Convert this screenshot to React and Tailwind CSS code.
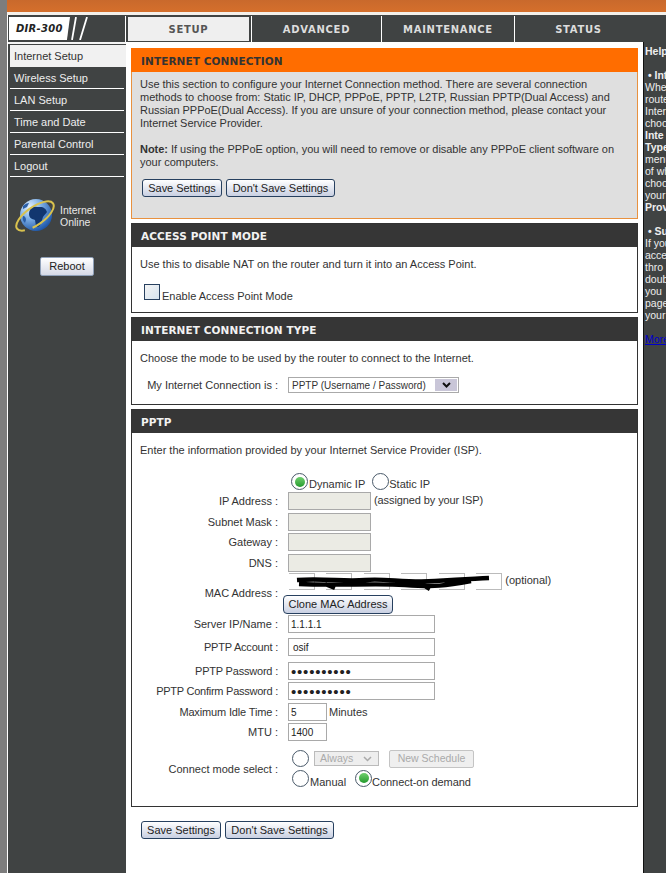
import React from 'react';

const bodyFont = "font-['Liberation_Sans',sans-serif]";
const headFont = "font-['DejaVu_Sans',sans-serif]";

const menu = ['Wireless Setup', 'LAN Setup', 'Time and Date', 'Parental Control', 'Logout'];

const helpLines = [
  ['Whe', false], ['route', false], ['Inter', false], ['choo', false], ['Inte', true], ['Type', true],
  ['menu', false], ['of wh', false], ['choo', false], ['your', false], ['Prov', true],
];
const helpLines2 = ['If you', 'acce', 'thro', 'doub', 'you', 'page', 'your'];

const Btn = ({ children, className = '' }) => (
  <button className={`h-[18px] rounded-[3px] border border-[#27405f] bg-gradient-to-b from-white to-[#c9d0e2] text-[11px] leading-none text-[#222] ${className}`}>
    {children}
  </button>
);

const Radio = ({ on, className = '' }) => (
  <span className={`flex h-[17px] w-[17px] shrink-0 items-center justify-center rounded-full border border-[#4a5a6a] bg-white ${className}`}>
    {on && <span className="h-[10px] w-[10px] rounded-full bg-gradient-to-b from-[#6fd06f] to-[#1f9a2c]" />}
  </span>
);

const Field = ({ className = '', children }) => (
  <div className={`flex h-[18px] items-center border border-[#a9a9a9] px-[2px] text-[10px] text-[#222] ${className}`}>
    {children}
  </div>
);

const Section = ({ title, children, className = '' }) => (
  <div className={`border border-[#333] bg-white ${className}`}>
    <div className={`flex h-[23px] items-center bg-[#363636] px-[9px] pt-[2px] text-[10.5px] font-bold tracking-[0.1px] text-[#f2f2f2] ${headFont}`}>
      {title}
    </div>
    {children}
  </div>
);

const Row = ({ label, className = '', labelClass = '', children }) => (
  <div className={`flex h-[18px] items-center ${className}`}>
    <div className={`w-[146px] shrink-0 text-right text-[11px] text-[#333] ${labelClass}`}>{label}</div>
    <div className="ml-[10px] flex items-center">{children}</div>
  </div>
);

const Globe = () => (
  <svg width="42" height="38" viewBox="0 0 42 38" className="shrink-0">
    <defs>
      <radialGradient id="gl" cx="30%" cy="25%" r="80%">
        <stop offset="0" stopColor="#e4f0fc" />
        <stop offset="0.45" stopColor="#7fb0e6" />
        <stop offset="1" stopColor="#1d56a8" />
      </radialGradient>
    </defs>
    <circle cx="22" cy="18" r="16" fill="url(#gl)" />
    <path d="M17 11c3-2 6-1 9-1 4 0 6 2 7 5-1 2-3 3-4 5l-2 6c-1 4-4 5-5 3l-1-6c-3-1-6-2-6-6 0-3 1-4 2-6z" fill="#12366f" />
    <path d="M9 9c2-2 4-3 6-3l-2 4-4 2zM9 19c2 0 3 2 3 4l-1 3c-2-2-3-4-2-7z" fill="#2a5ea8" />
    <ellipse cx="21" cy="19" rx="22" ry="9" transform="rotate(-35 21 19)" fill="none" stroke="#d9c24e" strokeWidth="2" strokeDasharray="34 8 60" />
  </svg>
);

export default function App() {
  return (
    <div className={`flex h-[873px] w-[666px] overflow-hidden bg-white text-[#333] ${bodyFont}`}>
      <div className="w-[7px] shrink-0 bg-[#7d7d7d]" />
      <div className="flex min-w-0 flex-1 flex-col">
        <div className="h-[12px] bg-gradient-to-b from-[#c9692c] to-[#d56f2c]" />
        <div className="h-[3px] bg-[#f4f0ea]" />

        <div className="ml-px flex h-[27px] bg-[#404343]">
          <div className="relative w-[117px] shrink-0 overflow-hidden">
            <div className={`ml-px mt-[2px] flex h-[23px] w-[61px] items-center bg-white pl-[7px] text-[10px] font-bold italic tracking-[0.3px] text-[#222] [clip-path:polygon(0_0,100%_0,95%_100%,0_100%)] ${headFont}`}>
              DIR-300
            </div>
            <svg className="absolute left-[62px] top-[2px]" width="26" height="23" viewBox="0 0 26 23">
              <path d="M6 0 L2 23 M17 0 L10 23" stroke="#fff" strokeWidth="1.8" fill="none" />
            </svg>
          </div>
          <div className={`flex flex-1 pt-px text-[10px] font-bold tracking-[0.7px] ${headFont}`}>
            <div className="flex w-[127px] items-center justify-center border-x border-white px-[2px] py-px">
              <div className="flex h-full w-full items-center justify-center bg-[#efefef] text-[#555]">SETUP</div>
            </div>
            <div className="flex w-[130px] items-center justify-center border-r border-white text-[#ddd]">ADVANCED</div>
            <div className="flex w-[133px] items-center justify-center border-r border-white text-[#ddd]">MAINTENANCE</div>
            <div className="flex w-[127px] items-center justify-center text-[#ddd]">STATUS</div>
          </div>
        </div>

        <div className="flex min-h-0 flex-1">
          <div className="ml-px w-[118px] shrink-0 border-t-2 border-[#f4f4f4] bg-[#404343] pt-px">
            <div className="ml-[2px] flex h-[22px] items-center bg-[#f1f1f1] pl-[4px] pt-px text-[11px] text-[#333]">Internet Setup</div>
            {menu.map((m) => (
              <div key={m} className="mx-[2px] flex h-[22px] items-center border-b border-white pl-[4px] pt-px text-[11px] text-[#eee]">
                {m}
              </div>
            ))}
            <div className="ml-[6px] mt-[20px] flex items-center gap-[4px]">
              <Globe />
              <div className="text-[10.5px] leading-[12px] text-[#e8e8e8]">
                Internet
                <br />
                Online
              </div>
            </div>
            <div className="mt-[22px] flex justify-center">
              <button className="h-[19px] w-[54px] rounded-[2px] border border-[#8fa0b8] bg-gradient-to-b from-white to-[#d5d9e6] text-[11px] text-[#222]">
                Reboot
              </button>
            </div>
          </div>

          <div className="w-[517px] shrink-0 px-[5px] pt-[6px]">
            <div className="h-[171px] border border-[#e8913f] bg-[#dfdfdf]">
              <div className={`-mx-px -mt-px flex h-[24px] items-center bg-[#ff6d00] px-[10px] pt-[3px] text-[10.5px] font-bold tracking-[0.1px] text-[#333] ${headFont}`}>
                INTERNET CONNECTION
              </div>
              <div className="px-[8px] pt-[6px] text-[11px] leading-[13px] tracking-[-0.03px]">
                <p>
                  Use this section to configure your Internet Connection method. There are several connection
                  <br />
                  methods to choose from: Static IP, DHCP, PPPoE, PPTP, L2TP, Russian PPTP(Dual Access) and
                  <br />
                  Russian PPPoE(Dual Access). If you are unsure of your connection method, please contact your
                  <br />
                  Internet Service Provider.
                </p>
                <p className="mt-[13px]">
                  <b>Note:</b> If using the PPPoE option, you will need to remove or disable any PPPoE client software on
                  <br />
                  your computers.
                </p>
                <div className="mt-[10px] flex gap-[4px] pl-[2px]">
                  <Btn className="w-[80px]">Save Settings</Btn>
                  <Btn className="w-[109px]">Don't Save Settings</Btn>
                </div>
              </div>
            </div>

            <Section title="ACCESS POINT MODE" className="mt-[4px] h-[90px]">
              <p className="px-[8px] pt-[11px] text-[11px] leading-[13px]">
                Use this to disable NAT on the router and turn it into an Access Point.
              </p>
              <div className="ml-[12px] mt-[13px] flex items-end gap-[2px] text-[11px] leading-[13px]">
                <span className="h-[16px] w-[16px] border border-[#27405f] bg-gradient-to-br from-[#f4f4f4] to-[#d5e3ef]" />
                <span className="translate-y-[3px]">Enable Access Point Mode</span>
              </div>
            </Section>

            <Section title="INTERNET CONNECTION TYPE" className="mt-[4px] h-[88px]">
              <p className="px-[8px] pt-[11px] text-[11px] leading-[13px]">
                Choose the mode to be used by the router to connect to the Internet.
              </p>
              <div className="mt-[11px] flex h-[18px] items-center">
                <div className="w-[146px] shrink-0 text-right text-[11px]">My Internet Connection is :</div>
                <div className="ml-[10px] flex h-[16px] w-[171px] items-center justify-between border border-[#aaa] pl-[3px] text-[10px]">
                  PPTP (Username / Password)
                  <span className="mr-px flex h-[12px] w-[22px] items-center justify-center bg-[#c9c6d8] text-[#111]">
                    <svg width="9" height="6" viewBox="0 0 9 6"><path d="M1 1l3.5 3.5L8 1" fill="none" stroke="#111" strokeWidth="2" /></svg>
                  </span>
                </div>
              </div>
            </Section>

            <Section title="PPTP" className="mt-[4px] h-[398px]">
              <p className="px-[8px] pt-[11px] text-[11px] leading-[13px]">
                Enter the information provided by your Internet Service Provider (ISP).
              </p>
              <div className="ml-[159px] mt-[16px] flex h-[18px] items-start text-[11px]">
                <Radio on />
                <span className="ml-px mt-[4px] leading-[15px]">Dynamic IP</span>
                <Radio className="ml-[7px]" />
                <span className="mt-[4px] leading-[15px]">Static IP</span>
              </div>
              <Row label="IP Address :" className="mt-px">
                <Field className="w-[83px] bg-[#ebebe4]" />
                <span className="ml-[3px] -mt-[2px] text-[11px] tracking-[-0.1px]">(assigned by your ISP)</span>
              </Row>
              <Row label="Subnet Mask :" className="mt-[3px]"><Field className="w-[83px] bg-[#ebebe4]" /></Row>
              <Row label="Gateway :" className="mt-[2px]"><Field className="w-[83px] bg-[#ebebe4]" /></Row>
              <Row label="DNS :" className="mt-[3px]"><Field className="w-[83px] bg-[#ebebe4]" /></Row>
              <div className="mt-[3px] flex h-[37px] items-center">
                <div className="w-[146px] shrink-0 text-right text-[11px]">MAC Address :</div>
                <div className="relative ml-[5px]">
                  <div className="ml-[6px] flex h-[18px] items-center gap-[11.4px]">
                    {[0, 1, 2, 3, 4, 5].map((i) => (
                      <span key={i} className="h-[17px] w-[26px] border-y border-r border-[#bbb]" />
                    ))}
                    <span className="-ml-[8px] -mt-[3px] whitespace-nowrap text-[11px]">(optional)</span>
                  </div>
                  <svg className="absolute left-[12px] top-[1px]" width="198" height="18" viewBox="0 0 198 18">
                    <path d="M2 6 C30 4 50 8 70 6 S110 9 140 7 S175 5 194 4 M4 10 C40 12 80 9 110 11 S150 12 176 7 M30 10l10 4 M125 9l10 6" fill="none" stroke="#000" strokeWidth="4.4" />
                  </svg>
                  <Btn className="mt-px h-[19px] w-[110px] rounded-[4px] text-[11px]">Clone MAC Address</Btn>
                </div>
              </div>
              <Row label="Server IP/Name :" className="mt-[3px]"><Field className="w-[147px]">1.1.1.1</Field></Row>
              <Row label="PPTP Account :" className="mt-[5px]" labelClass="tracking-[-0.2px]"><Field className="w-[147px] pl-[4px]">osif</Field></Row>
              <Row label="PPTP Password :" className="mt-[6px]" labelClass="tracking-[-0.2px]">
                <Field className="w-[147px] text-[15px] leading-none tracking-[0.8px]">••••••••••</Field>
              </Row>
              <Row label="PPTP Confirm Password :" className="mt-[2px]" labelClass="tracking-[-0.25px]">
                <Field className="w-[147px] text-[15px] leading-none tracking-[0.8px]">••••••••••</Field>
              </Row>
              <Row label="Maximum Idle Time :" className="mt-[3px]" labelClass="tracking-[-0.15px]">
                <Field className="w-[39px]">5</Field>
                <span className="ml-[2px] text-[11px]">Minutes</span>
              </Row>
              <Row label="MTU :" className="mt-[2px]"><Field className="w-[39px]">1400</Field></Row>
              <div className="mt-[7px] flex items-center">
                <div className="w-[146px] shrink-0 pt-[2px] text-right text-[11px]">Connect mode select :</div>
                <div className="ml-[14px] text-[11px]">
                  <div className="flex h-[21px] items-center">
                    <Radio />
                    <span className="ml-[5px] flex h-[15px] w-[65px] items-center justify-between border border-[#bbb] bg-[#eee] pl-[5px] text-[10.5px] text-[#aaa]">
                      Always
                      <svg className="mr-[6px]" width="9" height="6" viewBox="0 0 9 6"><path d="M1 1l3.5 3.5L8 1" fill="none" stroke="#aaa" strokeWidth="1.5" /></svg>
                    </span>
                    <span className="ml-[10px] flex h-[18px] w-[85px] items-center justify-center rounded-[2px] border border-[#c4c4c4] bg-[#efefef] text-[10.5px] text-[#aaa]">
                      New Schedule
                    </span>
                  </div>
                  <div className="-mt-px flex h-[20px] items-center">
                    <Radio />
                    <span className="ml-px mt-[8px]">Manual</span>
                    <Radio className="ml-[9px]" on />
                    <span className="mt-[8px] tracking-[-0.05px]">Connect-on demand</span>
                  </div>
                </div>
              </div>
            </Section>

            <div className="ml-[10px] mt-[14px] flex gap-[4px]">
              <Btn className="w-[80px]">Save Settings</Btn>
              <Btn className="w-[109px]">Don't Save Settings</Btn>
            </div>
          </div>

          <div className="w-[40px] shrink-0 overflow-hidden whitespace-nowrap border-l border-[#111] bg-[#404343] pl-px pt-[2px] text-[10.5px] leading-[12px] text-[#eee]">
            <div className="mt-[1px] font-bold">Helpful</div>
            <div className="mt-[12px] font-bold">&nbsp;• Internet</div>
            {helpLines.map(([t, bold], i) => (
              <div key={i} className={bold ? 'font-bold' : ''}>{t}</div>
            ))}
            <div className="mt-[12px] font-bold">&nbsp;• Support</div>
            {helpLines2.map((t, i) => (
              <div key={i}>{t}</div>
            ))}
            <div className="mt-[12px] text-[#0000cc] underline">More...</div>
          </div>
        </div>
      </div>
    </div>
  );
}
